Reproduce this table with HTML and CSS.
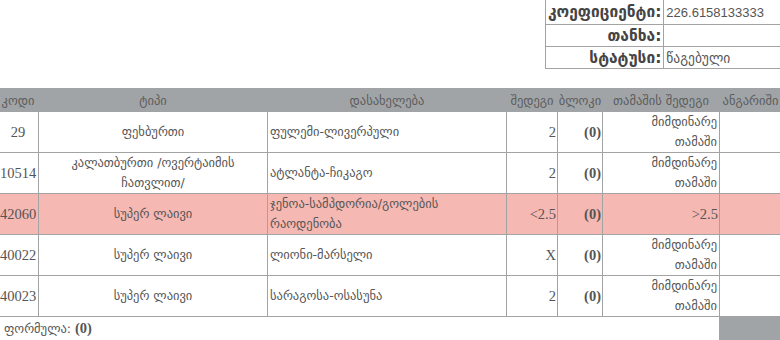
FILE: index.html
```html
<!DOCTYPE html>
<html lang="ka">
<head>
<meta charset="utf-8">
<link rel="stylesheet" href="styles.css">
</head>
<body>
<div class="page">
  <div class="info-wrap">
    <table class="info">
      <tr class="first"><th>კოეფიციენტი:</th><td class="val">226.6158133333</td></tr>
      <tr><th>თანხა:</th><td></td></tr>
      <tr><th>სტატუსი:</th><td>წაგებული</td></tr>
    </table>
  </div>
  <table class="bets">
    <colgroup>
      <col class="c-code"><col class="c-type"><col class="c-name"><col class="c-res"><col class="c-block"><col class="c-game"><col class="c-acc">
    </colgroup>
    <thead>
      <tr><th>კოდი</th><th>ტიპი</th><th>დასახელება</th><th>შედეგი</th><th>ბლოკი</th><th>თამაშის შედეგი</th><th>ანგარიში</th></tr>
    </thead>
    <tbody>
      <tr>
        <td class="center num">29</td><td class="center">ფეხბურთი</td><td class="left">ფულემი-ლივერპული</td><td class="right num">2</td><td class="right num b">(0)</td><td class="right">მიმდინარე<br>თამაში</td><td></td>
      </tr>
      <tr>
        <td class="center num">10514</td><td class="center">კალათბურთი /ოვერტაიმის<br>ჩათვლით/</td><td class="left">ატლანტა-ჩიკაგო</td><td class="right num">2</td><td class="right num b">(0)</td><td class="right">მიმდინარე<br>თამაში</td><td></td>
      </tr>
      <tr class="lost">
        <td class="center num">42060</td><td class="center">სუპერ ლაივი</td><td class="left">ჯენოა-სამპდორია/გოლების<br>რაოდენობა</td><td class="right num">&lt;2.5</td><td class="right num b">(0)</td><td class="right num">&gt;2.5</td><td></td>
      </tr>
      <tr>
        <td class="center num">40022</td><td class="center">სუპერ ლაივი</td><td class="left">ლიონი-მარსელი</td><td class="right num">X</td><td class="right num b">(0)</td><td class="right">მიმდინარე<br>თამაში</td><td></td>
      </tr>
      <tr>
        <td class="center num">40023</td><td class="center">სუპერ ლაივი</td><td class="left">სარაგოსა-ოსასუნა</td><td class="right num">2</td><td class="right num b">(0)</td><td class="right">მიმდინარე<br>თამაში</td><td></td>
      </tr>
    </tbody>
    <tfoot>
      <tr><td colspan="6" class="formula">ფორმულა: <span class="num b">(0)</span></td><td class="gray"></td></tr>
    </tfoot>
  </table>
</div>
</body>
</html>
```
FILE: styles.css
```css
html, body {
  margin: 0;
  padding: 0;
  background: #fff;
  overflow: hidden;
}
body {
  width: 780px;
  height: 340px;
  font-family: "DejaVu Sans", sans-serif;
  color: #555;
}
.page {
  display: flex;
  flex-direction: column;
  margin-top: -1px;
}
.info-wrap {
  display: flex;
  justify-content: flex-end;
}
.info {
  border-collapse: collapse;
  width: 237px;
  margin-right: -2px;
}
.info th, .info td {
  border: 1px solid #a3a3a3;
  height: 21px;
  padding: 0 2px;
  font-size: 13.5px;
}
.info tr.first th, .info tr.first td {
  height: 24px;
}
.info th {
  width: 98px;
  text-align: right;
  font-weight: bold;
  font-size: 15.5px;
  color: #444;
  white-space: nowrap;
}
.info td {
  text-align: left;
  color: #555;
}
.info td.val {
  font-family: "Liberation Sans", sans-serif;
  font-size: 13px;
}
.bets {
  border-collapse: collapse;
  table-layout: fixed;
  width: 784px;
  margin-left: -3px;
  margin-top: 19px;
}
.c-code { width: 41px; }
.c-type { width: 229px; }
.c-name { width: 239px; }
.c-res { width: 51px; }
.c-block { width: 45px; }
.c-game { width: 117px; }
.c-acc { width: 62px; }
.bets thead th {
  background: #a1a4a7;
  color: #5c5c5c;
  font-weight: normal;
  font-size: 12.5px;
  height: 24px;
  padding: 0;
  text-align: center;
  white-space: nowrap;
  border: none;
}
.bets td {
  border: 1px solid #a3a3a3;
  font-size: 12.5px;
  line-height: 20px;
  height: 40px;
  padding: 0 2px;
  vertical-align: middle;
}
.bets tbody tr:first-child td {
  border-top: none;
}
.bets td.center { text-align: center; }
.bets td.left { text-align: left; }
.bets td.right { text-align: right; }
.num {
  font-family: "Liberation Serif", serif;
  font-size: 14.5px;
}
.bets td.num { font-size: 14.5px; padding: 0 1px; }
.b { font-weight: bold; }
.lost td { background: #f6b8b2; }
.bets tfoot td {
  height: 22px;
  line-height: 22px;
}
.bets tfoot td.formula {
  padding-left: 6px;
}
.bets tfoot td.gray {
  background: #a1a4a7;
}
```
